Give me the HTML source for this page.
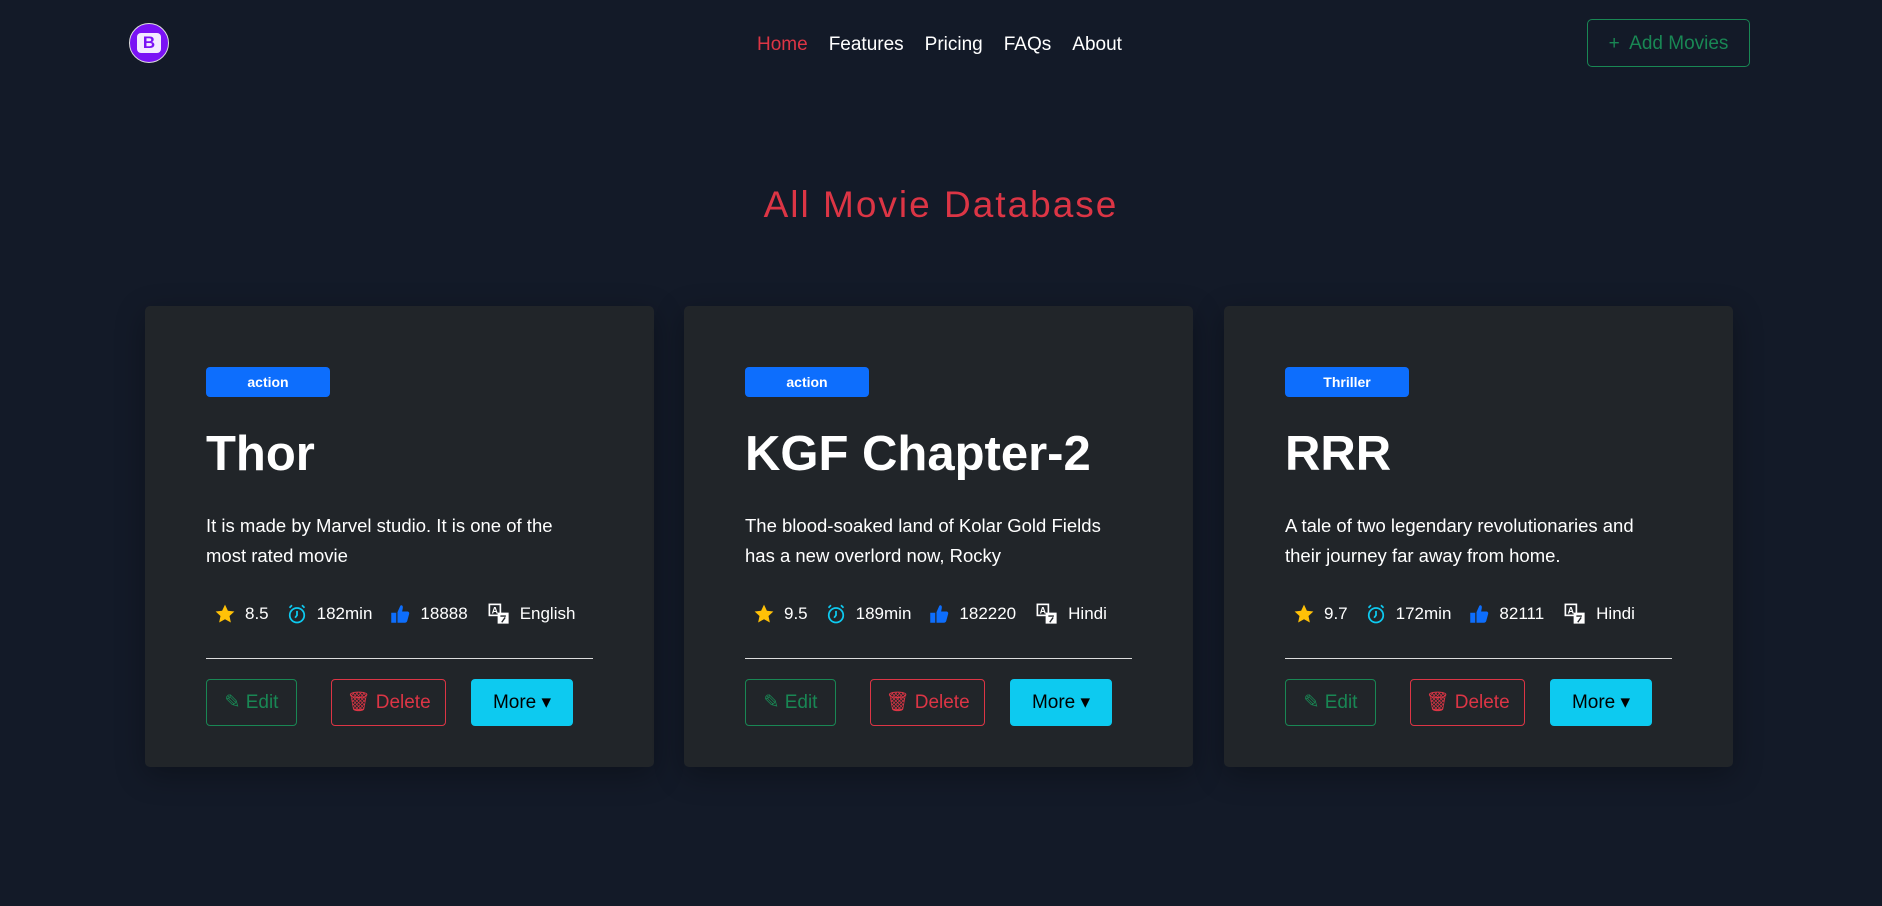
<!DOCTYPE html>
<html><head><meta charset="utf-8"><style>
*{box-sizing:border-box;margin:0;padding:0}
body{width:1882px;height:906px;background:#131a28;font-family:"Liberation Sans",sans-serif;color:#fff;position:relative;overflow:hidden}
.logo{position:absolute;left:129px;top:23px;width:40px;height:40px;border-radius:50%;background:#7a12f5;border:1px solid #ddd;display:flex;align-items:center;justify-content:center}
.logo span{width:24px;height:20px;background:#f3eaff;border-radius:4px;color:#7a12f5;font-weight:bold;font-size:17px;line-height:20px;text-align:center}
nav{position:absolute;left:757px;top:34px;font-size:19px;display:flex;gap:21px}
nav a{color:#fff;text-decoration:none}
nav a.h{color:#dc3545}
.add{position:absolute;left:1587px;top:19px;width:163px;height:48px;border:1px solid #198754;border-radius:5px;color:#198754;font-size:19px;line-height:48px;text-align:center}
h1{position:absolute;left:0;width:1882px;top:184px;text-align:center;font-weight:normal;color:#dc3545;font-size:37px;letter-spacing:2px;font-family:"Comic Sans MS","Liberation Sans",sans-serif}
.card{position:absolute;top:306px;width:509px;height:461px;background:#212529;border-radius:5px;box-shadow:0 8px 30px rgba(0,0,0,.3)}
.badge{position:absolute;left:61px;top:61px;width:124px;height:30px;background:#0d6efd;border-radius:4px;font-size:14px;font-weight:bold;text-align:center;line-height:30px}
.t{position:absolute;left:61px;top:120px;font-size:49px;font-weight:bold;white-space:nowrap}
.p{position:absolute;left:61px;top:205px;width:385px;font-size:18.5px;line-height:30px}
.s{position:absolute;left:70px;top:297px;font-size:17px;display:flex;align-items:center;white-space:nowrap}
.s svg{margin-right:10px}
.s span{margin-right:18px}
.hr{position:absolute;left:61px;top:352px;width:387px;height:1px;background:#ddd}
.b{position:absolute;top:373px;height:47px;border-radius:4px;font-size:19px;line-height:45px;text-align:center}
.e{left:61px;width:91px;border:1px solid #198754;color:#198754}
.d{left:186px;width:115px;border:1px solid #dc3545;color:#dc3545}
.m{left:326px;width:102px;background:#0dcaf0;color:#000;border:1px solid #0dcaf0}
</style></head><body>
<div class="logo"><span>B</span></div>
<nav><a class="h">Home</a><a>Features</a><a>Pricing</a><a>FAQs</a><a>About</a></nav>
<div class="add">+&nbsp; Add Movies</div>
<h1>All Movie Database</h1>

<div class="card" style="left:145px">
<div class="badge">action</div><div class="t">Thor</div>
<div class="p">It is made by Marvel studio. It is one of the most rated movie</div>
<div class="s"><svg width="20" height="20" viewBox="0 0 16 16"><path fill="#ffc107" d="M8 .5l2.3 4.9 5.2.6-3.9 3.6 1.1 5.2L8 12.2l-4.7 2.6 1.1-5.2L.5 6l5.2-.6z"/></svg><span>8.5</span><svg width="20" height="20" viewBox="0 0 16 16" fill="none" stroke="#0dcaf0" stroke-width="1.4"><circle cx="8" cy="9" r="5.8"/><path d="M8 5.5V9l-1.5 2M2 3l2-2M14 3l-2-2"/></svg><span>182min</span><svg width="20" height="20" viewBox="0 0 16 16"><path fill="#0d6efd" d="M9 1c1 0 1.5 1 1.2 2.5L9.7 6H14c1 0 1.6 1 1.3 2l-1.5 5.5c-.3 1-1 1.5-2 1.5H6V6.5L8 2c.2-.6.5-1 1-1zM1 7h4v8H1z"/></svg><span style="margin-right:20px">18888</span><svg width="22" height="22" viewBox="0 0 16 16"><rect x="1" y="1" width="8" height="8" fill="none" stroke="#fff" stroke-width="1.2"/><text x="2.6" y="7.5" font-size="6.5" fill="#fff" font-weight="bold" font-family="Liberation Sans">A</text><rect x="7" y="7" width="8" height="8" fill="#fff"/><path d="M9 9.5h4M11 9v1M10 14l2.5-3.5" stroke="#212529" stroke-width="1"/></svg><span>English</span></div>
<div class="hr"></div>
<div class="b e">✎ Edit</div><div class="b d">🗑 Delete</div><div class="b m">More ▾</div>
</div>

<div class="card" style="left:684px">
<div class="badge">action</div><div class="t">KGF Chapter-2</div>
<div class="p">The blood-soaked land of Kolar Gold Fields has a new overlord now, Rocky</div>
<div class="s"><svg width="20" height="20" viewBox="0 0 16 16"><path fill="#ffc107" d="M8 .5l2.3 4.9 5.2.6-3.9 3.6 1.1 5.2L8 12.2l-4.7 2.6 1.1-5.2L.5 6l5.2-.6z"/></svg><span>9.5</span><svg width="20" height="20" viewBox="0 0 16 16" fill="none" stroke="#0dcaf0" stroke-width="1.4"><circle cx="8" cy="9" r="5.8"/><path d="M8 5.5V9l-1.5 2M2 3l2-2M14 3l-2-2"/></svg><span>189min</span><svg width="20" height="20" viewBox="0 0 16 16"><path fill="#0d6efd" d="M9 1c1 0 1.5 1 1.2 2.5L9.7 6H14c1 0 1.6 1 1.3 2l-1.5 5.5c-.3 1-1 1.5-2 1.5H6V6.5L8 2c.2-.6.5-1 1-1zM1 7h4v8H1z"/></svg><span style="margin-right:20px">182220</span><svg width="22" height="22" viewBox="0 0 16 16"><rect x="1" y="1" width="8" height="8" fill="none" stroke="#fff" stroke-width="1.2"/><text x="2.6" y="7.5" font-size="6.5" fill="#fff" font-weight="bold" font-family="Liberation Sans">A</text><rect x="7" y="7" width="8" height="8" fill="#fff"/><path d="M9 9.5h4M11 9v1M10 14l2.5-3.5" stroke="#212529" stroke-width="1"/></svg><span>Hindi</span></div>
<div class="hr"></div>
<div class="b e">✎ Edit</div><div class="b d">🗑 Delete</div><div class="b m">More ▾</div>
</div>

<div class="card" style="left:1224px">
<div class="badge">Thriller</div><div class="t">RRR</div>
<div class="p">A tale of two legendary revolutionaries and their journey far away from home.</div>
<div class="s"><svg width="20" height="20" viewBox="0 0 16 16"><path fill="#ffc107" d="M8 .5l2.3 4.9 5.2.6-3.9 3.6 1.1 5.2L8 12.2l-4.7 2.6 1.1-5.2L.5 6l5.2-.6z"/></svg><span>9.7</span><svg width="20" height="20" viewBox="0 0 16 16" fill="none" stroke="#0dcaf0" stroke-width="1.4"><circle cx="8" cy="9" r="5.8"/><path d="M8 5.5V9l-1.5 2M2 3l2-2M14 3l-2-2"/></svg><span>172min</span><svg width="20" height="20" viewBox="0 0 16 16"><path fill="#0d6efd" d="M9 1c1 0 1.5 1 1.2 2.5L9.7 6H14c1 0 1.6 1 1.3 2l-1.5 5.5c-.3 1-1 1.5-2 1.5H6V6.5L8 2c.2-.6.5-1 1-1zM1 7h4v8H1z"/></svg><span style="margin-right:20px">82111</span><svg width="22" height="22" viewBox="0 0 16 16"><rect x="1" y="1" width="8" height="8" fill="none" stroke="#fff" stroke-width="1.2"/><text x="2.6" y="7.5" font-size="6.5" fill="#fff" font-weight="bold" font-family="Liberation Sans">A</text><rect x="7" y="7" width="8" height="8" fill="#fff"/><path d="M9 9.5h4M11 9v1M10 14l2.5-3.5" stroke="#212529" stroke-width="1"/></svg><span>Hindi</span></div>
<div class="hr"></div>
<div class="b e">✎ Edit</div><div class="b d">🗑 Delete</div><div class="b m">More ▾</div>
</div>
</body></html>
